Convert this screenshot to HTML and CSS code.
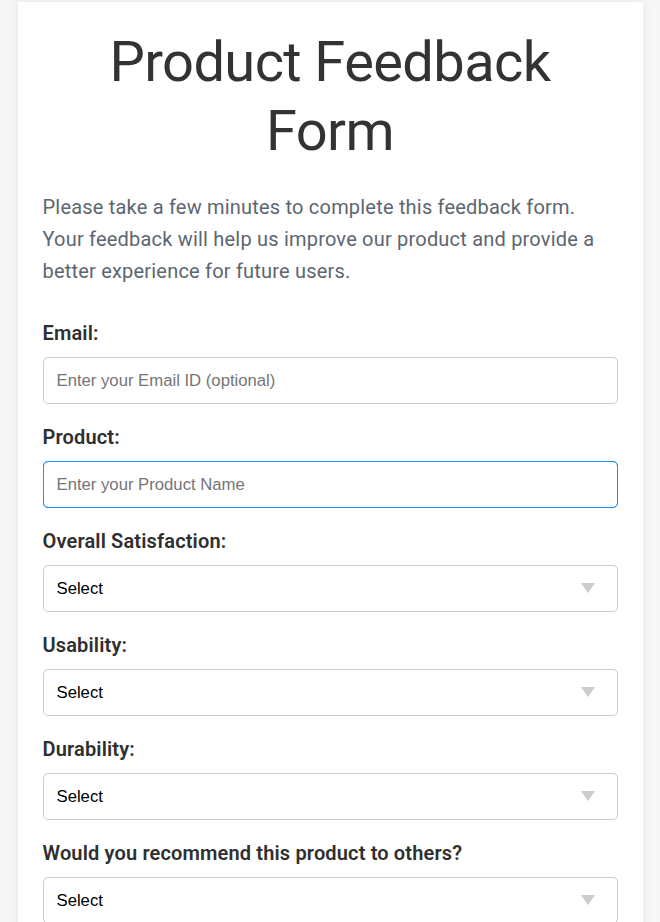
FILE: index.html
```html
<!DOCTYPE html>
<html lang="en">
<head>
<meta charset="utf-8">
<title>Product Feedback Form</title>
<link rel="stylesheet" href="styles.css">
</head>
<body>
<main class="card">
  <h1 class="title">Product Feedback Form</h1>
  <p class="intro">Please take a few minutes to complete this feedback form. Your feedback will help us improve our product and provide a better experience for future users.</p>
  <form class="form">
    <div class="field">
      <label class="label" for="email">Email:</label>
      <input class="control" id="email" type="email" placeholder="Enter your Email ID (optional)">
    </div>
    <div class="field">
      <label class="label" for="product">Product:</label>
      <input class="control control-active" id="product" type="text" placeholder="Enter your Product Name">
    </div>
    <div class="field">
      <label class="label" for="overall">Overall Satisfaction:</label>
      <div class="select-wrap">
        <select class="control select" id="overall">
          <option>Select</option>
          <option>Very Satisfied</option>
          <option>Satisfied</option>
          <option>Neutral</option>
          <option>Dissatisfied</option>
        </select>
      </div>
    </div>
    <div class="field">
      <label class="label" for="usability">Usability:</label>
      <div class="select-wrap">
        <select class="control select" id="usability">
          <option>Select</option>
          <option>Excellent</option>
          <option>Good</option>
          <option>Fair</option>
          <option>Poor</option>
        </select>
      </div>
    </div>
    <div class="field">
      <label class="label" for="durability">Durability:</label>
      <div class="select-wrap">
        <select class="control select" id="durability">
          <option>Select</option>
          <option>Excellent</option>
          <option>Good</option>
          <option>Fair</option>
          <option>Poor</option>
        </select>
      </div>
    </div>
    <div class="field">
      <label class="label" for="recommend">Would you recommend this product to others?</label>
      <div class="select-wrap">
        <select class="control select" id="recommend">
          <option>Select</option>
          <option>Yes</option>
          <option>No</option>
          <option>Maybe</option>
        </select>
      </div>
    </div>
    <div class="field">
      <label class="label" for="comments">Additional Comments:</label>
      <textarea class="control textarea" id="comments" placeholder="Enter your comments"></textarea>
    </div>
    <button class="submit" type="submit">Submit</button>
  </form>
</main>
</body>
</html>
```

FILE: styles.css
```css
* {
  box-sizing: border-box;
}

html, body {
  margin: 0;
  padding: 0;
}

body {
  background: #f6f6f6;
  font-family: Roboto, "Liberation Sans", Arial, sans-serif;
  color: #333;
}

.card {
  width: 625px;
  margin: 2px auto 20px;
  padding: 26px 25px 30px;
  background: #fff;
  box-shadow: 0 0 10px rgba(0, 0, 0, 0.08);
}

.title {
  margin: 0 0 25px;
  font-size: 56px;
  line-height: 69px;
  font-weight: 400;
  letter-spacing: -0.6px;
  text-align: center;
  color: #333;
}

.intro {
  margin: 0 0 35px;
  font-size: 20px;
  line-height: 32px;
  letter-spacing: 0.2px;
  color: #5c6670;
}

.form {
  display: flex;
  flex-direction: column;
}

.field {
  display: flex;
  flex-direction: column;
  margin-bottom: 22px;
}

.label {
  display: block;
  margin-bottom: 12px;
  font-size: 20px;
  line-height: 23px;
  font-weight: 600;
  letter-spacing: 0.15px;
  color: #2f2f2f;
}

.control {
  width: 100%;
  height: 47px;
  padding: 0 13px;
  border: 1px solid #ccc;
  border-radius: 5px;
  background: #fff;
  font-family: Arial, "Liberation Sans", sans-serif;
  font-size: 16.7px;
  color: #000;
  outline: none;
}

.control::placeholder {
  color: #757575;
}

.control-active {
  border-color: rgb(30, 144, 255);
  outline: 1px solid rgb(30, 144, 255);
  outline-offset: -1px;
}

.select-wrap {
  position: relative;
}

.select {
  appearance: none;
  -webkit-appearance: none;
  padding-right: 40px;
}

.select-wrap::after {
  content: "";
  position: absolute;
  top: 18px;
  right: 23px;
  width: 0;
  height: 0;
  border-left: 7.5px solid transparent;
  border-right: 7.5px solid transparent;
  border-top: 10px solid #ccc;
  pointer-events: none;
}

.textarea {
  height: 120px;
  padding: 12px 13px;
  resize: vertical;
}

.submit {
  align-self: flex-start;
  padding: 12px 24px;
  border: 0;
  border-radius: 5px;
  background: #1e90ff;
  color: #fff;
  font-family: Roboto, "Liberation Sans", sans-serif;
  font-size: 18px;
}
```
